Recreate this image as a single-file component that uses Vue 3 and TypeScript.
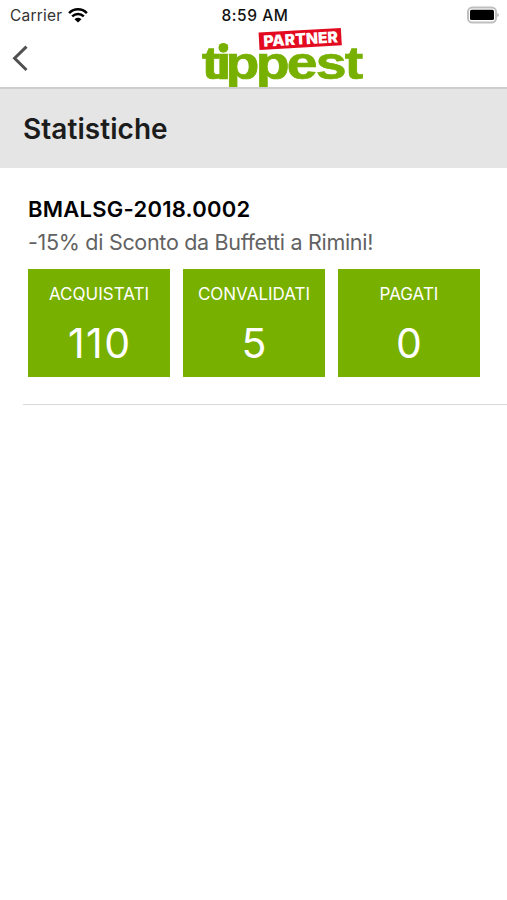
<script setup lang="ts">
interface Stat {
  label: string
  value: number
}

const stats: Stat[] = [
  { label: 'Acquistati', value: 110 },
  { label: 'Convalidati', value: 5 },
  { label: 'Pagati', value: 0 },
]
</script>

<template>
  <main class="screen">
    <header class="top">
      <div class="status">
        <div class="carrier">
          <span>Carrier</span>
          <svg class="wifi" viewBox="0 0 20 15" width="20" height="15" aria-hidden="true">
            <path d="M1.1 5.1C6.2.1 13.8.1 18.9 5.1" />
            <path d="M4.2 8.3C7.5 5.1 12.5 5.1 15.8 8.3" />
            <path class="solid" d="M6.5 11.2C8.6 9.3 11.4 9.3 13.5 11.2L10 14.6Z" />
          </svg>
        </div>
        <time class="clock">8:59 AM</time>
        <svg class="battery" viewBox="0 0 34 18" width="34" height="18" aria-hidden="true">
          <rect class="shell" x="2" y="1.4" width="28" height="15" rx="4.2" />
          <rect x="4" y="3.8" width="24" height="10.2" rx="1.6" />
          <path class="tip" d="M31.2 6.9Q33 7.5 33 9T31.2 11.1Z" />
        </svg>
      </div>
      <nav class="nav">
        <button class="back" type="button" aria-label="Indietro">
          <svg viewBox="0 0 18 28" width="18" height="28" aria-hidden="true">
            <path d="M15.5 2.6 3.6 14.3 15.5 26" />
          </svg>
        </button>
        <svg class="logo" viewBox="200 26 166 61" width="166" height="61" role="img" aria-label="Tippest Partner">
          <clipPath id="word-clip"><rect x="198" y="26" width="170" height="61" /></clipPath>
          <g clip-path="url(#word-clip)">
            <g transform="translate(201.7 78.6) scale(1.18 1)">
              <text class="word" x="0 12.2 20.2 45.9 72 96.7 121.3" y="0">tippest</text>
            </g>
            <circle class="dot" cx="223.4" cy="47.8" r="4.9" />
          </g>
          <g transform="rotate(-3.2 300 39)">
            <rect class="tag" x="259" y="30.2" width="82.4" height="17.4" />
            <text class="partner" x="263.4" y="44.6" textLength="74.5" lengthAdjust="spacingAndGlyphs">PARTNER</text>
          </g>
        </svg>
      </nav>
    </header>

    <h1 class="title">Statistiche</h1>

    <section class="deal">
      <h2 class="code">BMALSG-2018.0002</h2>
      <p class="desc">-15% di Sconto da Buffetti a Rimini!</p>
      <div class="stats">
        <div v-for="stat in stats" :key="stat.label" class="stat">
          <span class="label">{{ stat.label }}</span>
          <span class="value">{{ stat.value }}</span>
        </div>
      </div>
    </section>
  </main>
</template>

<style>
body {
  margin: 0;
  background: #fff;
}
</style>

<style scoped>
.screen {
  min-height: 900px;
  background: #fff;
  color: #1c1c1c;
  font-family: Inter, "Liberation Sans", sans-serif;
}
.top {
  box-sizing: border-box;
  height: 89px;
  border-bottom: 2px solid #cdcdcd;
}
.status {
  display: grid;
  grid-template-columns: 1fr auto 1fr;
  align-items: center;
  height: 30px;
  padding: 0 7px 0 10px;
  box-sizing: border-box;
  font-size: 15.5px;
}
.carrier {
  display: flex;
  align-items: center;
  gap: 6px;
  color: #333;
  letter-spacing: 0.2px;
}
.wifi {
  fill: none;
  stroke: #000;
  stroke-width: 2.5;
}
.wifi .solid {
  fill: #000;
  stroke: none;
}
.clock {
  font-weight: 500;
  letter-spacing: 0.55px;
  color: #111;
}
.battery {
  justify-self: end;
}
.shell {
  fill: #fff;
  stroke: #bfbfbf;
  stroke-width: 2;
}
.tip {
  fill: #bcbcbc;
}
.nav {
  display: grid;
  grid-template-columns: 200px 166px;
  margin-top: -4px;
  height: 61px;
}
.back {
  width: 18px;
  height: 28px;
  margin: 17.5px 0 0 11px;
  padding: 0;
  border: 0;
  background: none;
}
.back svg {
  display: block;
  fill: none;
  stroke: #505050;
  stroke-width: 3;
}
.logo {
  overflow: visible;
}
.word {
  font: 700 47px "Liberation Sans", sans-serif;
  fill: #78b000;
  stroke: #78b000;
  stroke-width: 0.7;
}
.dot {
  fill: #78b000;
}
.tag {
  fill: #e30b20;
}
.partner {
  font: 900 15.6px Inter, sans-serif;
  fill: #fff;
}
.title {
  box-sizing: border-box;
  height: 79px;
  margin: 0;
  padding-left: 23px;
  background: #e5e5e5;
  font-size: 28px;
  line-height: 80px;
  font-weight: 600;
  letter-spacing: 0.05px;
}
.deal {
  box-sizing: border-box;
  height: 237px;
  margin-left: 23px;
  padding: 26px 27px 0 5px;
  border-bottom: 1px solid #d9d9d9;
}
.code {
  margin: 0;
  font-size: 22px;
  line-height: 30px;
  font-weight: 600;
  letter-spacing: 0.25px;
  color: #000;
}
.desc {
  margin: 3px 0 0;
  font-size: 21.5px;
  line-height: 30px;
  letter-spacing: -0.3px;
  color: #626262;
  white-space: nowrap;
}
.stats {
  display: grid;
  grid-template-columns: repeat(3, 1fr);
  gap: 13px;
  margin-top: 12px;
}
.stat {
  display: flex;
  flex-direction: column;
  align-items: center;
  height: 108px;
  background: #78b000;
  color: #fff;
}
.label {
  margin-top: 13px;
  font-size: 17px;
  line-height: 24px;
  text-transform: uppercase;
}
.value {
  margin: 12px -1.5px 0 0;
  font-size: 41px;
  line-height: 50px;
  letter-spacing: 1.5px;
}
</style>
